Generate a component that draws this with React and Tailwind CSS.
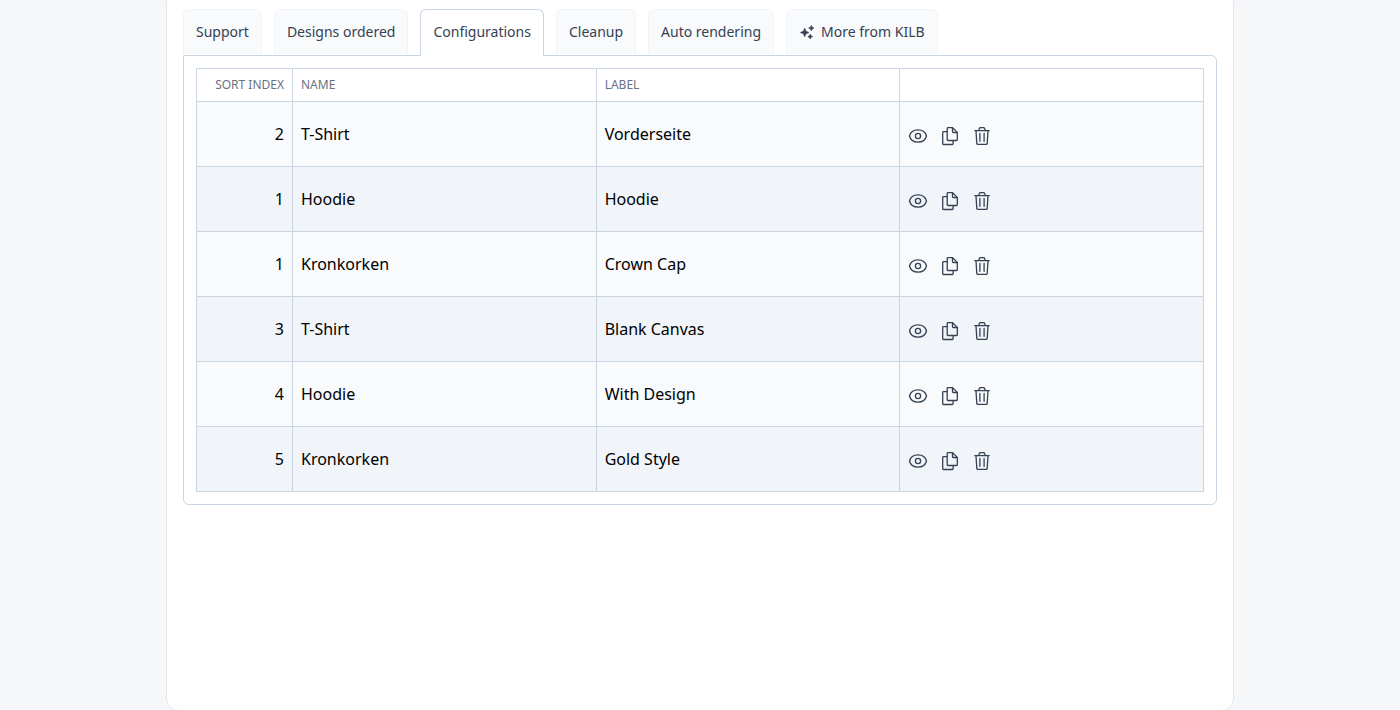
const sparkles = (
  <svg width="16" height="16" viewBox="0 0 16 16" fill="currentColor" stroke="currentColor" strokeWidth="0.6" strokeLinejoin="round">
    <path d="M5.700 4.200L7 7.200L10 8.500L7 9.800L5.700 12.800L4.400 9.800L1.400 8.500L4.400 7.200Z" />
    <path d="M12.300 1.400L13.200 3.200L15 4.100L13.200 5L12.300 6.800L11.400 5L9.600 4.100L11.400 3.200Z" />
    <path d="M11.200 10.200L12 11.800L13.600 12.600L12 13.400L11.200 15L10.400 13.400L8.800 12.600L10.400 11.800Z" />
  </svg>
);

const tabs = [
  { label: "Support" },
  { label: "Designs ordered" },
  { label: "Configurations", active: true },
  { label: "Cleanup" },
  { label: "Auto rendering" },
  { label: "More from KILB", icon: sparkles },
];

const rows = [
  { sort: 2, name: "T-Shirt", label: "Vorderseite" },
  { sort: 1, name: "Hoodie", label: "Hoodie" },
  { sort: 1, name: "Kronkorken", label: "Crown Cap" },
  { sort: 3, name: "T-Shirt", label: "Blank Canvas" },
  { sort: 4, name: "Hoodie", label: "With Design" },
  { sort: 5, name: "Kronkorken", label: "Gold Style" },
];

function IconButton({ title, children }) {
  return (
    <button type="button" aria-label={title} className="block">
      <svg width="20" height="20" viewBox="0 0 20 20" fill="none" stroke="currentColor" strokeWidth="1.3" strokeLinecap="round" strokeLinejoin="round">
        {children}
      </svg>
    </button>
  );
}

function RowActions() {
  return (
    <div className="flex gap-3 pt-1 text-gray-700">
      <IconButton title="View">
        <path d="M1.5 10C2.4 6.300 5.700 3.900 10 3.900S17.600 6.300 18.500 10C17.600 13.700 14.300 16.100 10 16.100S2.400 13.700 1.500 10Z" />
        <circle cx="10" cy="10" r="2.600" />
      </IconButton>
      <IconButton title="Duplicate">
        <path d="M8 1.700h4.600l4.700 4.700v7.300a.8.8 0 0 1-.8.800H8a.8.8 0 0 1-.8-.8V2.500A.8.8 0 0 1 8 1.700Z" />
        <path d="M12.500 2v3.700a.8.8 0 0 0 .8.800H17" />
        <path d="M7 5.600H3.500a.8.8 0 0 0-.8.800v11.300a.8.8 0 0 0 .8.800h8.800a.8.8 0 0 0 .8-.8V14.700" />
      </IconButton>
      <IconButton title="Delete">
        <path d="M2.800 4.600h14.400" />
        <path d="M6.700 4.400l.7-1.900a1.200 1.200 0 0 1 1.100-.8h3a1.200 1.200 0 0 1 1.100.8l.7 1.900" />
        <path d="M4 4.800l.8 12.600a1.100 1.100 0 0 0 1.100 1h8.200a1.100 1.100 0 0 0 1.100-1L16 4.800" />
        <path d="M7.900 7.500v7.800M12.100 7.500v7.800" />
      </IconButton>
    </div>
  );
}

export default function App() {
  return (
    <div className="h-screen overflow-hidden bg-[#f5f7f9] font-['Noto_Sans',sans-serif] text-black">
      <div className="-mt-2 mx-auto w-[1068px] h-[719px] rounded-xl border border-gray-200 bg-white px-4 pt-4">
        <div className="flex gap-3">
          {tabs.map((tab) => (
            <div
              key={tab.label}
              className={
                "relative flex items-center gap-1.5 rounded-t-md border border-b-0 px-3 text-sm text-gray-700 " +
                (tab.active ? "z-10 h-[47px] -mb-px border-slate-300 bg-white pb-0.5" : "h-[45px] mb-px border-slate-100 bg-slate-50")
              }
            >
              {tab.icon}
              {tab.label}
            </div>
          ))}
        </div>

        <div className="rounded-md rounded-tl-none border border-slate-300 p-3">
          <table className="w-full table-fixed border-collapse">
            <colgroup>
              <col className="w-24" />
              <col />
              <col />
              <col />
            </colgroup>
            <thead>
              <tr className="h-[33px] text-left text-xs text-gray-500">
                <th className="border border-slate-300 px-2 text-right font-normal">SORT INDEX</th>
                <th className="border border-slate-300 px-2 font-normal">NAME</th>
                <th className="border border-slate-300 px-2 font-normal">LABEL</th>
                <th className="border border-slate-300" />
              </tr>
            </thead>
            <tbody>
              {rows.map((row) => (
                <tr key={row.sort + row.label} className="h-[65px] odd:bg-slate-50 even:bg-slate-100">
                  <td className="border border-slate-300 px-2 text-right">{row.sort}</td>
                  <td className="border border-slate-300 px-2">{row.name}</td>
                  <td className="border border-slate-300 px-2">{row.label}</td>
                  <td className="border border-slate-300 px-2">
                    <RowActions />
                  </td>
                </tr>
              ))}
            </tbody>
          </table>
        </div>
      </div>
    </div>
  );
}
